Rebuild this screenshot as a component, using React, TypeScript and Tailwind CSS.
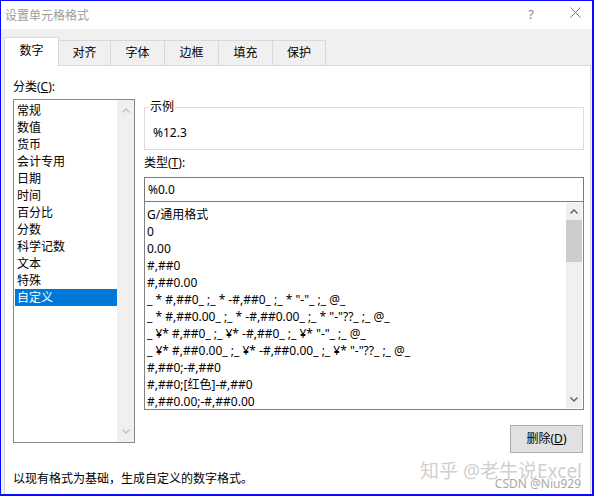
import React from "react";

const Chevron = ({ up, color }: { up?: boolean; color: string }) => (
  <svg width="8" height="5" viewBox="0 0 8 5" className="block">
    {up ? (
      <path d="M0.5 4.5 L4 1 L7.5 4.5" fill="none" stroke={color} strokeWidth="1.4" />
    ) : (
      <path d="M0.5 0.5 L4 4 L7.5 0.5" fill="none" stroke={color} strokeWidth="1.4" />
    )}
  </svg>
);

const categories = ["常规", "数值", "货币", "会计专用", "日期", "时间", "百分比", "分数", "科学记数", "文本", "特殊", "自定义"];

const formats = [
  "G/通用格式",
  "0",
  "0.00",
  "#,##0",
  "#,##0.00",
  '_ * #,##0_ ;_ * -#,##0_ ;_ * "-"_ ;_ @_',
  '_ * #,##0.00_ ;_ * -#,##0.00_ ;_ * "-"??_ ;_ @_',
  '_ ¥* #,##0_ ;_ ¥* -#,##0_ ;_ ¥* "-"_ ;_ @_',
  '_ ¥* #,##0.00_ ;_ ¥* -#,##0.00_ ;_ ¥* "-"??_ ;_ @_',
  "#,##0;-#,##0",
  "#,##0;[红色]-#,##0",
  "#,##0.00;-#,##0.00",
];

const tabs = [
  { label: "数字", w: "w-[55px]" },
  { label: "对齐", w: "w-[52px]" },
  { label: "字体", w: "w-[54px]" },
  { label: "边框", w: "w-[54px]" },
  { label: "填充", w: "w-[54px]" },
  { label: "保护", w: "w-[53px]" },
];

export default function App() {
  return (
    <div className="w-[594px] h-[496px] border-l border-t border-r-2 border-b-2 border-[#0a0aff] bg-[#f0f0f0] flex flex-col font-['Noto_Sans','Noto_Sans_CJK_SC',sans-serif] text-[12px] text-black overflow-hidden">
      {/* title bar */}
      <div className="h-[28px] bg-white flex items-center pl-[4px] pr-[11px] shrink-0">
        <span className="text-[12px] text-[#9c9c9c] leading-[16px] mt-[1px]">设置单元格格式</span>
        <span className="ml-auto text-[13px] text-[#8a8a8a] leading-[16px] mb-[3px]">?</span>
        <svg width="11" height="11" viewBox="0 0 11 11" className="ml-[36px] mb-[5px]">
          <path d="M0.5 0.5 L10.5 10.5 M10.5 0.5 L0.5 10.5" stroke="#7a7a7a" strokeWidth="1" fill="none" />
        </svg>
      </div>
      {/* tabs */}
      <div className="h-[36px] flex items-end pl-[3px] shrink-0">
        {tabs.map((t, i) =>
          i === 0 ? (
            <div
              key={t.label}
              className={`${t.w} h-[29px] bg-white border border-b-0 border-[#d9d9d9] -mb-px relative z-10 flex items-center justify-center pb-[2px]`}
            >
              {t.label}
            </div>
          ) : (
            <div
              key={t.label}
              className={`${t.w} h-[25px] bg-[#f0f0f0] border-t border-r border-[#d9d9d9] flex items-center justify-center`}
            >
              {t.label}
            </div>
          )
        )}
      </div>
      {/* panel */}
      <div className="flex-1 ml-[3px] mr-[1px] bg-white border border-b-0 border-[#d9d9d9] relative pl-[8px]">
        <div className="flex">
          {/* left column */}
          <div className="w-[122px] pt-[13px]">
            <div className="leading-[16px]">
              分类(<span className="underline">C</span>):
            </div>
            <div className="mt-[4px] h-[344px] border border-[#828790] flex">
              <div className="flex-1 pl-[1px] pt-[2px]">
                {categories.map((c, i) => (
                  <div
                    key={c}
                    className={
                      i === categories.length - 1
                        ? "h-[17px] leading-[17px] pl-[2px] bg-[#0078d7] text-white"
                        : "h-[17px] leading-[17px] pl-[2px]"
                    }
                  >
                    {c}
                  </div>
                ))}
              </div>
              <div className="w-[17px] bg-[#f0f0f0] flex flex-col items-center justify-between py-[8px]">
                <Chevron up color="#c2c2c2" />
                <Chevron color="#c2c2c2" />
              </div>
            </div>
          </div>
          {/* right column */}
          <div className="ml-[9px] w-[440px] flex flex-col">
            <div className="mt-[41px] h-[43px] border border-[#dcdcdc] relative pl-[8px] pt-[17px]">
              <span className="absolute -top-[9px] left-[4px] bg-white px-[1px] leading-[16px]">示例</span>
              <div className="leading-[16px]">%12.3</div>
            </div>
            <div className="mt-[5px] leading-[16px]">
              类型(<span className="underline">T</span>):
            </div>
            <div className="mt-[6px] h-[25px] border border-[#7a7a7a] flex items-center pl-[3px]">%0.0</div>
            <div className="h-[208px] border border-t-0 border-[#828282] flex">
              <div className="flex-1 pl-[2px] pt-[4px]">
                {formats.map((f) => (
                  <div key={f} className="h-[17px] leading-[17px] whitespace-pre">
                    {f}
                  </div>
                ))}
              </div>
              <div className="w-[16px] my-[1px] mr-[1px] bg-[#f0f0f0] flex flex-col">
                <div className="h-[17px] flex items-center justify-center">
                  <Chevron up color="#606060" />
                </div>
                <div className="h-[42px] bg-[#cdcdcd]" />
                <div className="flex-1" />
                <div className="h-[17px] flex items-center justify-center">
                  <Chevron color="#606060" />
                </div>
              </div>
            </div>
            <div className="flex justify-end mt-[15px]">
              <div className="w-[73px] h-[28px] bg-[#e1e1e1] border border-[#adadad] flex items-center justify-center mr-[1px]">
                删除(<span className="underline">D</span>)
              </div>
            </div>
          </div>
        </div>
        <div className="mt-[18px] leading-[16px]">以现有格式为基础，生成自定义的数字格式。</div>
        {/* watermark */}
        <div className="absolute right-[8px] bottom-[12px] text-[19px] leading-[22px] text-[#d0d0d0] whitespace-nowrap">
          知乎 @老牛说Excel
        </div>
        <div className="absolute right-[9px] bottom-[3px] text-[12px] leading-[14px] text-[#a8a8a8] whitespace-nowrap">
          CSDN @Niu929
        </div>
      </div>
    </div>
  );
}
